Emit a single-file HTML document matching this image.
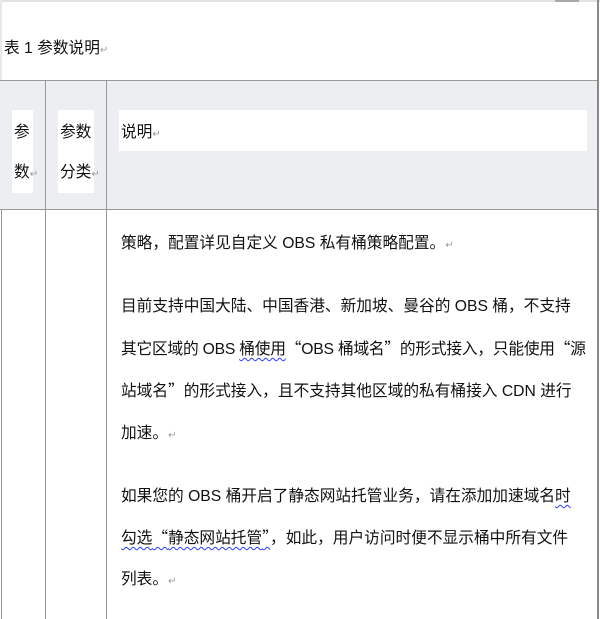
<!DOCTYPE html>
<html><head><meta charset="utf-8"><style>
body{margin:0;width:600px;height:619px;background:#fff;position:relative;overflow:hidden;font-family:"Liberation Sans","Noto Sans CJK SC",sans-serif;color:#111;font-size:15.7px}
.a{position:absolute}
.t{position:absolute;white-space:nowrap;line-height:20px}
.r{color:#999;font-size:10px}
.q{font-family:"Noto Sans CJK SC",sans-serif}
.w{text-decoration:underline wavy #2a3cff;text-decoration-thickness:1px;text-underline-offset:3px}
</style></head><body>
<div class="a" style="left:0;top:0;width:600px;height:2px;background:#e2e2e2"></div>
<div class="a" style="left:0;top:0;width:2px;height:80px;background:#e8e8e8"></div>
<div class="a" style="left:555px;top:0;width:24px;height:2px;background:#aaa"></div>
<div class="t" style="left:4px;top:39px">表 1 参数说明<span class="r">↵</span></div>
<div class="a" style="left:0;top:80px;width:598px;height:129px;background:#edeef2"></div>
<div class="a" style="left:0;top:80px;width:598px;height:1px;background:#999"></div>
<div class="a" style="left:0;top:209px;width:598px;height:1px;background:#999"></div>
<div class="a" style="left:597px;top:0;width:2px;height:619px;background:#888"></div>
<div class="a" style="left:45px;top:80px;width:1px;height:539px;background:#999"></div>
<div class="a" style="left:106px;top:80px;width:1px;height:539px;background:#999"></div>
<div class="a" style="left:1px;top:209px;width:1px;height:410px;background:#999"></div>
<div class="a" style="left:12px;top:110px;width:21px;height:83px;background:#fff"></div>
<div class="a" style="left:58px;top:110px;width:36px;height:83px;background:#fff"></div>
<div class="a" style="left:119px;top:110px;width:468px;height:41px;background:#fff"></div>
<div class="t" style="left:14px;top:123px">参</div>
<div class="t" style="left:14px;top:163px">数<span class="r">↵</span></div>
<div class="t" style="left:60px;top:123px">参数</div>
<div class="t" style="left:60px;top:163px">分类<span class="r">↵</span></div>
<div class="t" style="left:121px;top:123px">说明<span class="r">↵</span></div>
<div class="t" style="left:121px;top:234px">策略，配置详见自定义 OBS 私有桶策略配置。<span class="r">↵</span></div>
<div class="t" style="left:121px;top:297px">目前支持中国大陆、中国香港、新加坡、曼谷的 OBS 桶，不支持</div>
<div class="t" style="left:121px;top:338px;letter-spacing:-0.2px">其它区域的 OBS <span class="w">桶使用</span><span class="q">“</span>OBS 桶域名<span class="q">”</span>的形式接入，只能使用<span class="q">“</span>源</div>
<div class="t" style="left:121px;top:380px">站域名<span class="q">”</span>的形式接入，且不支持其他区域的私有桶接入 CDN 进行</div>
<div class="t" style="left:121px;top:424px">加速。<span class="r">↵</span></div>
<div class="t" style="left:121px;top:487px">如果您的 OBS 桶开启了静态网站托管业务，请在添加加速域名<span class="w">时</span></div>
<div class="t" style="left:121px;top:527px"><span class="w">勾选<span class="q">“</span>静态网站托管<span class="q">”</span></span>，如此，用户访问时便不显示桶中所有文件</div>
<div class="t" style="left:121px;top:570px">列表。<span class="r">↵</span></div>
</body></html>
